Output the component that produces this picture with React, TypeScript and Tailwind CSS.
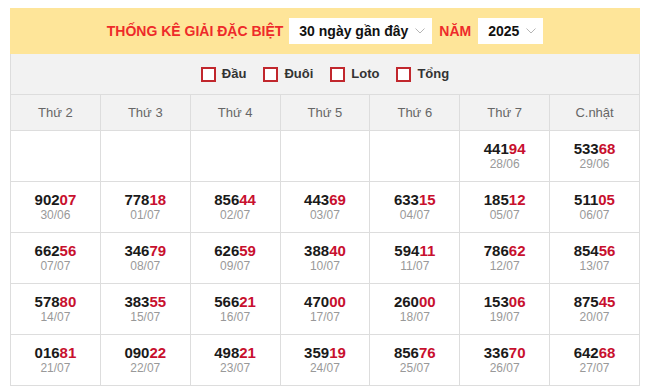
import React from 'react';

type Cell = { num: string; date: string } | null;

const rows: Cell[][] = [
  [null, null, null, null, null, { num: '44194', date: '28/06' }, { num: '53368', date: '29/06' }],
  [
    { num: '90207', date: '30/06' },
    { num: '77818', date: '01/07' },
    { num: '85644', date: '02/07' },
    { num: '44369', date: '03/07' },
    { num: '63315', date: '04/07' },
    { num: '18512', date: '05/07' },
    { num: '51105', date: '06/07' },
  ],
  [
    { num: '66256', date: '07/07' },
    { num: '34679', date: '08/07' },
    { num: '62659', date: '09/07' },
    { num: '38840', date: '10/07' },
    { num: '59411', date: '11/07' },
    { num: '78662', date: '12/07' },
    { num: '85456', date: '13/07' },
  ],
  [
    { num: '57880', date: '14/07' },
    { num: '38355', date: '15/07' },
    { num: '56621', date: '16/07' },
    { num: '47000', date: '17/07' },
    { num: '26000', date: '18/07' },
    { num: '15306', date: '19/07' },
    { num: '87545', date: '20/07' },
  ],
  [
    { num: '01681', date: '21/07' },
    { num: '09022', date: '22/07' },
    { num: '49821', date: '23/07' },
    { num: '35919', date: '24/07' },
    { num: '85676', date: '25/07' },
    { num: '33670', date: '26/07' },
    { num: '64268', date: '27/07' },
  ],
];

const days = ['Thứ 2', 'Thứ 3', 'Thứ 4', 'Thứ 5', 'Thứ 6', 'Thứ 7', 'C.nhật'];
const filters = ['Đầu', 'Đuôi', 'Loto', 'Tổng'];

const Chevron = () => (
  <svg width="10" height="6" viewBox="0 0 10 6" className="ml-[7px]">
    <polyline points="0.5,0.5 5,5 9.5,0.5" fill="none" stroke="#b5b5b5" strokeWidth="1" />
  </svg>
);

const App: React.FC = () => {
  return (
    <div className="min-h-screen bg-white pt-[8px] pl-[10px]" style={{ fontFamily: '"Liberation Sans", Arial, sans-serif' }}>
      <div className="w-[630px]">
        {/* Header */}
        <div className="h-[46px] bg-[#fee599] flex items-center justify-center">
          <span className="text-[14px] font-bold text-[#ee2a2a]">THỐNG KÊ GIẢI ĐẶC BIỆT</span>
          <div className="ml-[6px] h-[26px] w-[143px] bg-white flex items-center pl-[10px] text-[14px] font-bold text-[#111]">
            30 ngày gần đây
            <Chevron />
          </div>
          <span className="ml-[7px] text-[14px] font-bold text-[#ee2a2a]">NĂM</span>
          <div className="ml-[7px] h-[26px] w-[65px] bg-white flex items-center pl-[10px] text-[14px] font-bold text-[#111]">
            2025
            <Chevron />
          </div>
        </div>

        {/* Filters */}
        <div className="h-[40px] bg-[#f2f2f2] border-x border-[#ddd] flex items-center justify-center gap-[17px]">
          {filters.map((f) => (
            <label key={f} className="flex items-center gap-[6px] text-[13px] font-bold text-[#333]">
              <span className="w-[15px] h-[15px] border-2 border-[#c1272d] bg-white" />
              {f}
            </label>
          ))}
        </div>

        {/* Table */}
        <table className="w-full table-fixed border-collapse">
          <thead>
            <tr className="h-[36px] bg-[#f2f2f2]">
              {days.map((d) => (
                <th key={d} className="border border-[#ddd] text-[13px] font-normal text-[#666] text-center">
                  {d}
                </th>
              ))}
            </tr>
          </thead>
          <tbody>
            {rows.map((r, i) => (
              <tr key={i} className="h-[51px]">
                {r.map((c, j) => (
                  <td key={j} className="border border-[#ddd] text-center align-middle p-0">
                    {c && (
                      <div className="flex flex-col items-center">
                        <span className="text-[15px] leading-[17px] font-bold text-[#1a1a1a]">
                          {c.num.slice(0, 3)}
                          <span className="text-[#c8102e]">{c.num.slice(3)}</span>
                        </span>
                        <span className="text-[12px] leading-[15px] text-[#999]">{c.date}</span>
                      </div>
                    )}
                  </td>
                ))}
              </tr>
            ))}
          </tbody>
        </table>
      </div>
    </div>
  );
};

export default App;
